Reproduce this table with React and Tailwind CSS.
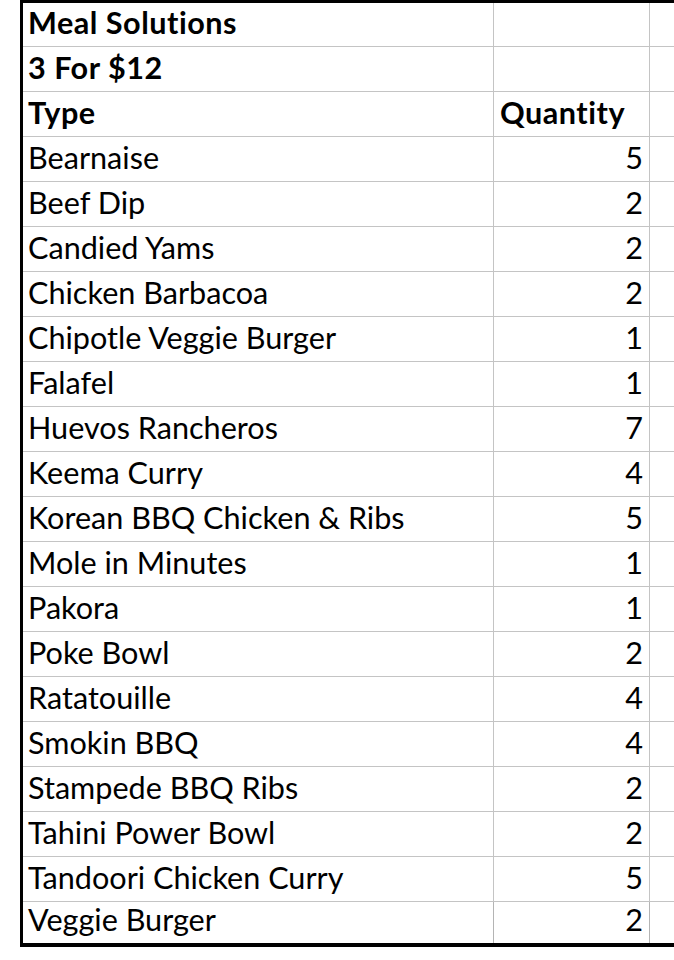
const rows = [
  { type: "Meal Solutions", qty: "", bold: true },
  { type: "3 For $12", qty: "", bold: true },
  { type: "Type", qty: "Quantity", bold: true, header: true },
  { type: "Bearnaise", qty: 5 },
  { type: "Beef Dip", qty: 2 },
  { type: "Candied Yams", qty: 2 },
  { type: "Chicken Barbacoa", qty: 2 },
  { type: "Chipotle Veggie Burger", qty: 1 },
  { type: "Falafel", qty: 1 },
  { type: "Huevos Rancheros", qty: 7 },
  { type: "Keema Curry", qty: 4 },
  { type: "Korean BBQ Chicken & Ribs", qty: 5 },
  { type: "Mole in Minutes", qty: 1 },
  { type: "Pakora", qty: 1 },
  { type: "Poke Bowl", qty: 2 },
  { type: "Ratatouille", qty: 4 },
  { type: "Smokin BBQ", qty: 4 },
  { type: "Stampede BBQ Ribs", qty: 2 },
  { type: "Tahini Power Bowl", qty: 2 },
  { type: "Tandoori Chicken Curry", qty: 5 },
  { type: "Veggie Burger", qty: 2 },
];

const Row = ({ type, qty, bold, header, first, last }) => {
  const h = first ? "h-[44px]" : last ? "h-[41px]" : "h-[45px]";
  const line = last ? "" : "border-b border-[#c4c4c4]";
  const weight = bold ? "font-bold tracking-[0.5px]" : "font-normal";
  return (
    <div className={`grid grid-cols-[471px_156px_1fr] ${h}`}>
      <div className={`flex items-end pl-[5px] pb-[5px] border-r border-[#b4b4b4] ${line} ${weight}`}>
        {type}
      </div>
      <div
        className={`flex items-end pb-[5px] border-r border-[#b4b4b4] ${line} ${weight} ${
          header ? "justify-start pl-[6px]" : "justify-end pr-[6px]"
        }`}
      >
        {qty}
      </div>
      <div className={line}></div>
    </div>
  );
};

export default function App() {
  return (
    <div className="w-[674px] h-[960px] bg-white overflow-hidden font-['Lato',sans-serif] text-[30.6px] leading-[36px] text-black">
      <div className="ml-[20px] w-[660px] border-l-[3px] border-t-[3px] border-b-[4px] border-black">
        {rows.map((r, i) => (
          <Row key={i} {...r} first={i === 0} last={i === rows.length - 1} />
        ))}
      </div>
    </div>
  );
}
